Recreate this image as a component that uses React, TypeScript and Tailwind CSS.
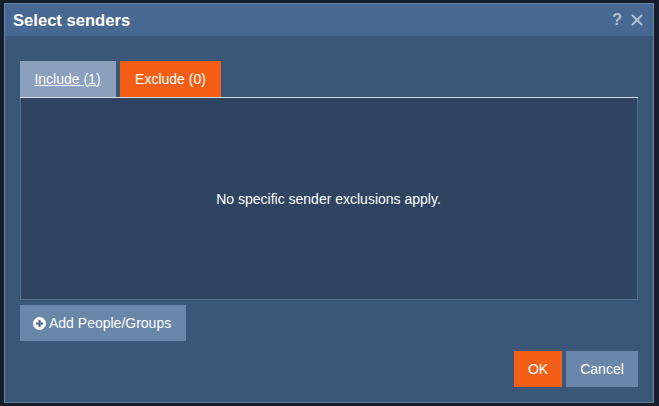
import { X } from "lucide-react";

export default function App() {
  return (
    <div className="w-[659px] h-[406px] bg-[#141e2d] pt-[3px] pl-[4px] font-['Liberation_Sans',sans-serif] text-white overflow-hidden">
      <div className="w-[650px] h-[400px] flex flex-col border border-[#6d84a0] border-b-[#5f7793] bg-[#3a5778]">
        {/* Title bar */}
        <div className="h-[32px] shrink-0 flex items-center justify-between pl-[8px] pr-[7px] bg-[#466892]">
          <h1 className="text-[16.6px] font-bold leading-none pt-[2px]">Select senders</h1>
          <div className="flex items-center gap-[6px] text-[#b4c2d3]">
            <span className="text-[16px] font-bold leading-none">?</span>
            <X size={18} strokeWidth={2.5} />
          </div>
        </div>

        <div className="flex-1 flex flex-col pt-[25px] px-[15px]">
          {/* Tabs */}
          <div className="flex gap-[4px] h-[36px] border-b border-[#d5dde6] box-content">
            <button className="w-[96px] h-[36px] pr-[1px] bg-[#8aa0bc] text-[14px] underline">Include (1)</button>
            <button className="w-[101px] h-[36px] bg-[#f45f17] text-[14px]">Exclude (0)</button>
          </div>

          {/* Panel */}
          <div className="w-[618px] h-[202px] pt-[2px] pr-[1px] flex items-center justify-center bg-[#2f4461] border border-t-0 border-[#556e8c] text-[14px]">
            No specific sender exclusions apply.
          </div>

          <button className="mt-[5px] w-[166px] h-[36px] pl-[13px] flex items-center gap-[3px] bg-[#6a87aa] text-[14px]">
            <svg width="13" height="13" viewBox="0 0 13 13">
              <circle cx="6.5" cy="6.5" r="6.5" fill="white" />
              <path d="M6.5 3v7M3 6.5h7" stroke="#4f6d90" strokeWidth="2.2" />
            </svg>
            Add People/Groups
          </button>

          <div className="mt-[10px] w-[618px] flex justify-end gap-[4px]">
            <button className="w-[48px] h-[36px] bg-[#f45f17] text-[14px]">OK</button>
            <button className="w-[72px] h-[36px] bg-[#6a87aa] text-[14px]">Cancel</button>
          </div>
        </div>
      </div>
    </div>
  );
}
